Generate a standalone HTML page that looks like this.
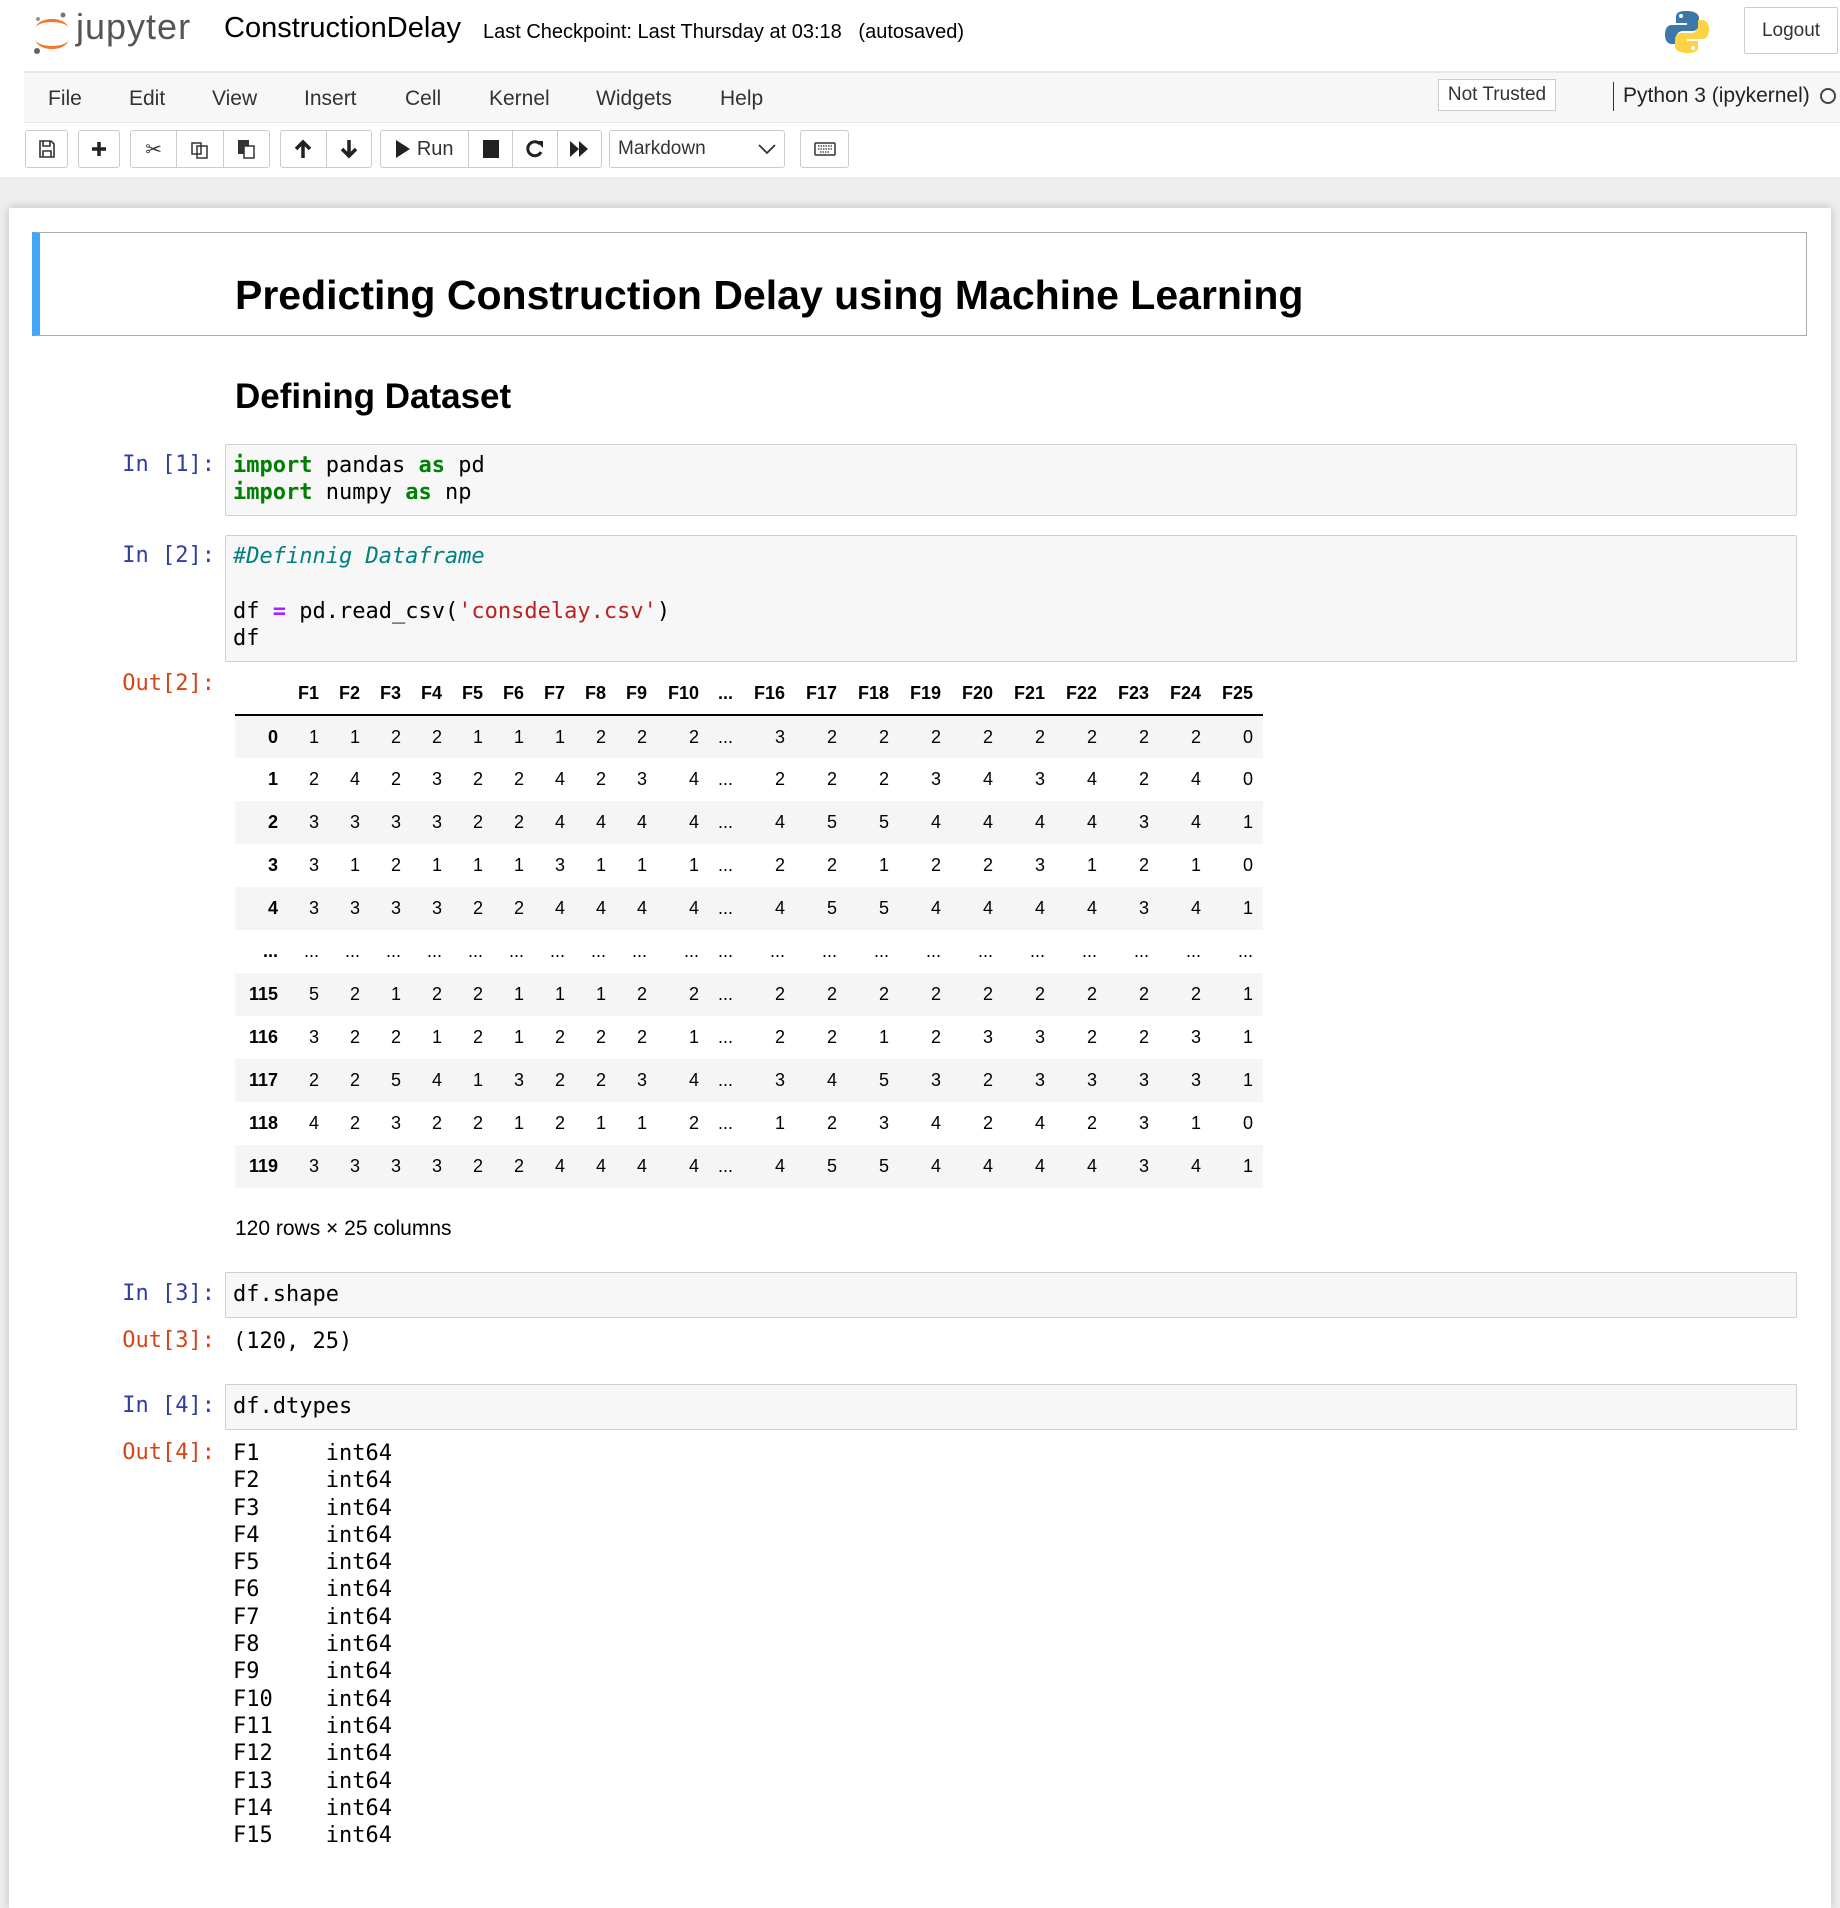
<!DOCTYPE html>
<html><head><meta charset="utf-8">
<style>
*{margin:0;padding:0;box-sizing:border-box}
body{width:1840px;height:1852px;overflow:hidden;background:#eee;font-family:"Liberation Sans",sans-serif;color:#000;position:relative}
.a{position:absolute}
#hdr{left:0;top:0;width:1840px;height:177px;background:#fff}
.menu{left:24px;top:71px;width:1816px;height:52px;background:#f7f7f7;border-top:2px solid #e7e7e7;border-bottom:1px solid #e7e7e7}
.mi{font-size:21px;color:#333;top:14px}
.btn{top:130px;height:38px;border:1px solid #ccc;border-radius:3px;background:#fff;display:flex;align-items:stretch}
.btn>div{flex:1;display:flex;align-items:center;justify-content:center;border-right:1px solid #ccc;font-size:20px;color:#333}
.btn>div:last-child{border-right:none}
#nb{left:9px;top:208px;width:1822px;height:1700px;background:#fff;box-shadow:0 0 10px rgba(0,0,0,.2)}
.mono{font-family:"DejaVu Sans Mono","Liberation Mono",monospace;font-size:22px}
.pin{color:#303f9f;text-align:right;width:120px;left:95px}
.pout{color:#d84315;text-align:right;width:120px;left:95px}
.inp{left:225px;width:1572px;background:#f7f7f7;border:1px solid #cfcfcf;border-radius:2px}
.code{left:233px;line-height:27.3px;white-space:pre}
.kw{color:#008000;font-weight:bold}
table{border-collapse:collapse;font-size:18px;table-layout:fixed}
td,th{height:43px;text-align:right;padding-right:10px}
th{font-weight:bold}
thead th{border-bottom:2px solid #000}
tbody tr:nth-child(odd){background:#f5f5f5}
</style></head><body>
<div id="hdr" class="a"></div>
<svg class="a" style="left:30px;top:10px" width="44" height="46" viewBox="0 0 44 46">
<path d="M6 18 A16 9 0 0 1 38 18 A16 6 0 0 0 6 18Z" fill="#f37726"/>
<path d="M6 30 A16 9 0 0 0 38 30 A16 6 0 0 1 6 30Z" fill="#f37726"/>
<circle cx="33" cy="5" r="2.5" fill="#767677"/><circle cx="7" cy="41" r="3" fill="#616262"/><circle cx="8" cy="9" r="2" fill="#989798"/>
</svg>
<div class="a" style="left:76px;top:6px;font-size:36px;color:#555;letter-spacing:1px">jupyter</div>
<div class="a" style="left:224px;top:12px;font-size:29px">ConstructionDelay</div>
<div class="a" style="left:483px;top:21px;font-size:20px">Last Checkpoint: Last Thursday at 03:18 &nbsp;&nbsp;(autosaved)</div>
<svg class="a" style="left:1664px;top:9px" width="46" height="46" viewBox="0 0 46 46">
<path d="M22 2c-10 0-10 4-10 7v5h11v2H8c-5 0-7 4-7 10s3 9 7 9h4v-6c0-4 3-7 7-7h10c3 0 6-3 6-6V9c0-4-4-7-13-7z" fill="#3b77a8"/>
<circle cx="17" cy="7" r="2" fill="#fff"/>
<path d="M24 44c10 0 10-4 10-7v-5H23v-2h15c5 0 7-4 7-10s-3-9-7-9h-4v6c0 4-3 7-7 7H17c-3 0-6 3-6 6v7c0 4 4 7 13 7z" fill="#fdd343"/>
<circle cx="29" cy="39" r="2" fill="#fff"/>
</svg>
<div class="a" style="left:1744px;top:7px;width:94px;height:47px;border:1px solid #ccc;border-radius:2px;font-size:19px;color:#333;text-align:center;line-height:45px">Logout</div>
<div class="a menu">
<span class="a mi" style="left:24px">File</span><span class="a mi" style="left:105px">Edit</span><span class="a mi" style="left:188px">View</span><span class="a mi" style="left:280px">Insert</span><span class="a mi" style="left:381px">Cell</span><span class="a mi" style="left:465px">Kernel</span><span class="a mi" style="left:572px">Widgets</span><span class="a mi" style="left:696px">Help</span>
</div>
<div class="a" style="left:1438px;top:79px;width:118px;height:32px;border:1px solid #ccc;background:#fff;font-size:19px;color:#333;text-align:center;line-height:30px">Not Trusted</div>
<div class="a" style="left:1613px;top:82px;width:1px;height:29px;background:#333"></div>
<div class="a" style="left:1623px;top:84px;font-size:21px;color:#222">Python 3 (ipykernel)</div>
<div class="a" style="left:1820px;top:88px;width:16px;height:16px;border:2px solid #444;border-radius:50%"></div>
<!-- toolbar -->
<div class="a btn" style="left:25px;width:43px"><div><svg width="16" height="18" viewBox="0 0 16 18"><path d="M1 1h11l3 3v13H1z M4 1v5h7V1 M4 11h8v6H4z" fill="none" stroke="#333" stroke-width="1.6"/></svg></div></div>
<div class="a btn" style="left:78px;width:42px"><div><svg width="16" height="16" viewBox="0 0 16 16"><path d="M8 1v14M1 8h14" stroke="#222" stroke-width="3.5"/></svg></div></div>
<div class="a btn" style="left:130px;width:140px"><div>✂</div><div><svg width="18" height="20" viewBox="0 0 18 20"><path d="M1 4h9v11H1z M6 7h10v12H6z" fill="#fff" stroke="#333" stroke-width="1.5"/></svg></div><div><svg width="18" height="20" viewBox="0 0 18 20"><path d="M1 1h11v14H1z" fill="#333"/><path d="M7 7h10v12H7z" fill="#fff" stroke="#333" stroke-width="1.5"/></svg></div></div>
<div class="a btn" style="left:280px;width:92px"><div><svg width="18" height="20" viewBox="0 0 18 20"><path d="M9 19V4M2 10l7-7 7 7" fill="none" stroke="#222" stroke-width="3.5"/></svg></div><div><svg width="18" height="20" viewBox="0 0 18 20"><path d="M9 1v15M2 10l7 7 7-7" fill="none" stroke="#222" stroke-width="3.5"/></svg></div></div>
<div class="a btn" style="left:380px;width:222px"><div style="flex:2"><svg width="16" height="20" viewBox="0 0 16 20"><path d="M1 1l14 9-14 9z" fill="#222"/></svg>&nbsp;Run</div><div><svg width="16" height="18"><rect width="16" height="18" fill="#222"/></svg></div><div><svg width="18" height="20" viewBox="0 0 18 20"><path d="M14 5A7 7 0 1 0 15 13" fill="none" stroke="#222" stroke-width="3"/><path d="M10 2h7v7z" fill="#222"/></svg></div><div><svg width="20" height="18" viewBox="0 0 20 18"><path d="M1 1l9 8-9 8zM10 1l9 8-9 8z" fill="#222"/></svg></div></div>
<div class="a btn" style="left:609px;width:176px;padding-left:8px;font-size:19px;color:#333;align-items:center">Markdown<svg style="position:absolute;right:8px;top:12px" width="18" height="12" viewBox="0 0 18 12"><path d="M1 2l8 8 8-8" fill="none" stroke="#333" stroke-width="1.8"/></svg></div>
<div class="a btn" style="left:800px;width:49px"><div><svg width="22" height="14" viewBox="0 0 22 14"><rect x="1" y="1" width="20" height="12" rx="1" fill="none" stroke="#333" stroke-width="1.5"/><path d="M4 4h14M4 7h14M6 10h10" stroke="#333" stroke-width="1.3" stroke-dasharray="1.5 1"/></svg></div></div>
<div id="nb" class="a"></div>
<div class="a" style="left:32px;top:232px;width:1775px;height:104px;border:1px solid #ababab;border-left:8px solid #42a5f5"></div>
<div class="a" style="left:235px;top:272px;font-size:41px;font-weight:bold">Predicting Construction Delay using Machine Learning</div>
<div class="a" style="left:235px;top:377px;font-size:35px;font-weight:bold">Defining Dataset</div>
<div class="a mono pin" style="top:452px">In [1]:</div>
<div class="a inp" style="top:444px;height:72px"></div>
<div class="a mono code" style="top:452px"><span class="kw">import</span> pandas <span class="kw">as</span> pd
<span class="kw">import</span> numpy <span class="kw">as</span> np</div>
<div class="a mono pin" style="top:543px">In [2]:</div>
<div class="a inp" style="top:535px;height:127px"></div>
<div class="a mono code" style="top:543px"><i style="color:#008080">#Definnig Dataframe</i>

df <span style="color:#aa22ff;font-weight:bold">=</span> pd.read_csv(<span style="color:#ba2121">'consdelay.csv'</span>)
df</div>
<div class="a mono pout" style="top:671px">Out[2]:</div>
<table class="a" style="left:235px;top:672px;width:1028px">
<colgroup><col style="width:53px"><col span="9" style="width:41px"><col style="width:52px"><col style="width:34px"><col span="10" style="width:52px"></colgroup>
<thead><tr><th></th><th>F1</th><th>F2</th><th>F3</th><th>F4</th><th>F5</th><th>F6</th><th>F7</th><th>F8</th><th>F9</th><th>F10</th><th>...</th><th>F16</th><th>F17</th><th>F18</th><th>F19</th><th>F20</th><th>F21</th><th>F22</th><th>F23</th><th>F24</th><th>F25</th></tr></thead>
<tbody>
<tr><th>0</th><td>1</td><td>1</td><td>2</td><td>2</td><td>1</td><td>1</td><td>1</td><td>2</td><td>2</td><td>2</td><td>...</td><td>3</td><td>2</td><td>2</td><td>2</td><td>2</td><td>2</td><td>2</td><td>2</td><td>2</td><td>0</td></tr>
<tr><th>1</th><td>2</td><td>4</td><td>2</td><td>3</td><td>2</td><td>2</td><td>4</td><td>2</td><td>3</td><td>4</td><td>...</td><td>2</td><td>2</td><td>2</td><td>3</td><td>4</td><td>3</td><td>4</td><td>2</td><td>4</td><td>0</td></tr>
<tr><th>2</th><td>3</td><td>3</td><td>3</td><td>3</td><td>2</td><td>2</td><td>4</td><td>4</td><td>4</td><td>4</td><td>...</td><td>4</td><td>5</td><td>5</td><td>4</td><td>4</td><td>4</td><td>4</td><td>3</td><td>4</td><td>1</td></tr>
<tr><th>3</th><td>3</td><td>1</td><td>2</td><td>1</td><td>1</td><td>1</td><td>3</td><td>1</td><td>1</td><td>1</td><td>...</td><td>2</td><td>2</td><td>1</td><td>2</td><td>2</td><td>3</td><td>1</td><td>2</td><td>1</td><td>0</td></tr>
<tr><th>4</th><td>3</td><td>3</td><td>3</td><td>3</td><td>2</td><td>2</td><td>4</td><td>4</td><td>4</td><td>4</td><td>...</td><td>4</td><td>5</td><td>5</td><td>4</td><td>4</td><td>4</td><td>4</td><td>3</td><td>4</td><td>1</td></tr>
<tr><th>...</th><td>...</td><td>...</td><td>...</td><td>...</td><td>...</td><td>...</td><td>...</td><td>...</td><td>...</td><td>...</td><td>...</td><td>...</td><td>...</td><td>...</td><td>...</td><td>...</td><td>...</td><td>...</td><td>...</td><td>...</td><td>...</td></tr>
<tr><th>115</th><td>5</td><td>2</td><td>1</td><td>2</td><td>2</td><td>1</td><td>1</td><td>1</td><td>2</td><td>2</td><td>...</td><td>2</td><td>2</td><td>2</td><td>2</td><td>2</td><td>2</td><td>2</td><td>2</td><td>2</td><td>1</td></tr>
<tr><th>116</th><td>3</td><td>2</td><td>2</td><td>1</td><td>2</td><td>1</td><td>2</td><td>2</td><td>2</td><td>1</td><td>...</td><td>2</td><td>2</td><td>1</td><td>2</td><td>3</td><td>3</td><td>2</td><td>2</td><td>3</td><td>1</td></tr>
<tr><th>117</th><td>2</td><td>2</td><td>5</td><td>4</td><td>1</td><td>3</td><td>2</td><td>2</td><td>3</td><td>4</td><td>...</td><td>3</td><td>4</td><td>5</td><td>3</td><td>2</td><td>3</td><td>3</td><td>3</td><td>3</td><td>1</td></tr>
<tr><th>118</th><td>4</td><td>2</td><td>3</td><td>2</td><td>2</td><td>1</td><td>2</td><td>1</td><td>1</td><td>2</td><td>...</td><td>1</td><td>2</td><td>3</td><td>4</td><td>2</td><td>4</td><td>2</td><td>3</td><td>1</td><td>0</td></tr>
<tr><th>119</th><td>3</td><td>3</td><td>3</td><td>3</td><td>2</td><td>2</td><td>4</td><td>4</td><td>4</td><td>4</td><td>...</td><td>4</td><td>5</td><td>5</td><td>4</td><td>4</td><td>4</td><td>4</td><td>3</td><td>4</td><td>1</td></tr>
</tbody></table>
<div class="a" style="left:235px;top:1217px;font-size:21px">120 rows × 25 columns</div>
<div class="a mono pin" style="top:1281px">In [3]:</div>
<div class="a inp" style="top:1272px;height:46px"></div>
<div class="a mono code" style="top:1281px">df.shape</div>
<div class="a mono pout" style="top:1328px">Out[3]:</div>
<div class="a mono code" style="top:1328px">(120, 25)</div>
<div class="a mono pin" style="top:1393px">In [4]:</div>
<div class="a inp" style="top:1384px;height:46px"></div>
<div class="a mono code" style="top:1393px">df.dtypes</div>
<div class="a mono pout" style="top:1440px">Out[4]:</div>
<div class="a mono code" style="top:1440px">F1     int64
F2     int64
F3     int64
F4     int64
F5     int64
F6     int64
F7     int64
F8     int64
F9     int64
F10    int64
F11    int64
F12    int64
F13    int64
F14    int64
F15    int64</div>
</body></html>
